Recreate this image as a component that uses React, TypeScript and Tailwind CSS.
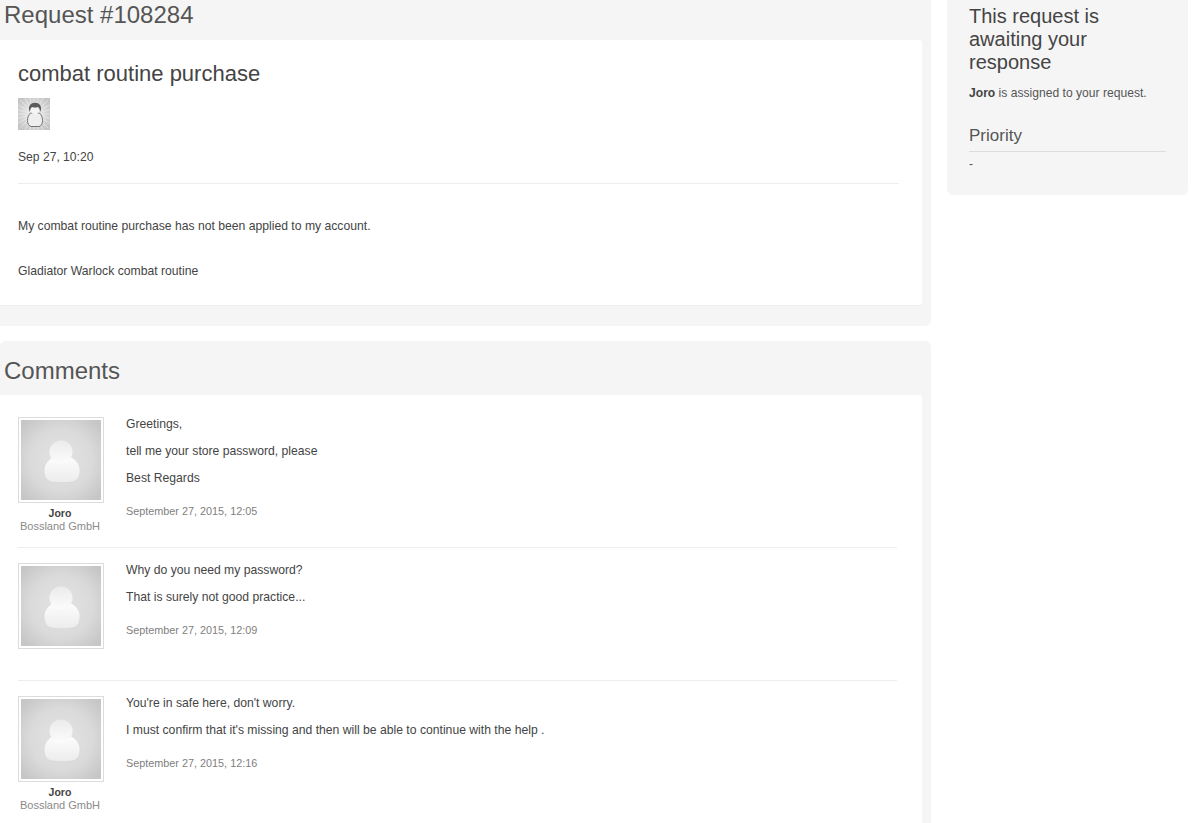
import React from "react";

function BigAvatar({ id }: { id: string }) {
  return (
    <div className="w-[86px] h-[86px] border border-[#dcdcdc] bg-white p-[2px] shrink-0">
      <svg width="80" height="80" viewBox="0 0 80 80" className="block">
        <defs>
          <radialGradient id={`bg-${id}`} cx="50%" cy="50%" r="65%">
            <stop offset="0%" stopColor="#e4e4e4" />
            <stop offset="60%" stopColor="#dadada" />
            <stop offset="100%" stopColor="#c6c6c6" />
          </radialGradient>
          <linearGradient id={`b-${id}`} x1="0" y1="0" x2="0" y2="1">
            <stop offset="0%" stopColor="#fefefe" />
            <stop offset="100%" stopColor="#ececec" />
          </linearGradient>
          <linearGradient id={`h-${id}`} x1="0" y1="0" x2="0" y2="1">
            <stop offset="0%" stopColor="#ebebeb" />
            <stop offset="100%" stopColor="#fcfcfc" />
          </linearGradient>
        </defs>
        <rect width="80" height="80" fill={`url(#bg-${id})`} />
        <path d="M23 50c0-5 3-9 7-12 3-2 7-3 11-3s8 1 11 3c4 3 7 7 7 12 0 6-2 10-6 11.500-5 1.500-19 1.500-24 0-4-1.500-6-5.500-6-11.500z" fill={`url(#b-${id})`} stroke="#d4d4d4" strokeWidth="0.6" />
        <circle cx="40" cy="32" r="11.5" fill={`url(#h-${id})`} />
      </svg>
    </div>
  );
}

function SmallAvatar() {
  const rays = Array.from({ length: 24 }, (_, i) => (i * Math.PI) / 12);
  return (
    <svg width="32" height="32" viewBox="0 0 32 32" className="block">
      <defs>
        <radialGradient id="glow" cx="50%" cy="50%" r="60%">
          <stop offset="0%" stopColor="#f6f6f6" />
          <stop offset="100%" stopColor="#c4c4c4" />
        </radialGradient>
      </defs>
      <rect width="32" height="32" fill="url(#glow)" />
      {rays.map((a, i) => (
        <line key={i} x1="16" y1="16" x2={16 + 20 * Math.cos(a)} y2={16 + 20 * Math.sin(a)} stroke="#f0f0f0" strokeWidth="0.6" />
      ))}
      <path d="M12.500 15c-2 2-3 4.500-3 7.500 0 3.500 1.500 5.500 3.500 6h8c2-.5 3.500-2.500 3.500-6 0-3-1-5.500-3-7.500z" fill="#eeeeee" stroke="#666666" strokeWidth="0.9" />
      <ellipse cx="17" cy="11.500" rx="4.500" ry="5" fill="#f4f4f4" />
      <path d="M12 14c-1.500-2-1.500-5 0-7 2-3 8-3 10 0 1.500 2 1.500 5 0 7 0-2-.5-4-2-5-2 .8-4 .8-6 0-1.500 1-2 3-2 5z" fill="#5c5c5c" />
    </svg>
  );
}

function Comment({ id, lines, date, author, className }: { id: string; lines: string[]; date: string; author: boolean; className: string }) {
  return (
    <div className={`flex ${className}`}>
      <div className="w-[86px] shrink-0">
        <BigAvatar id={id} />
        {author && (
          <div className="text-center leading-[13px] mt-[4px] w-[84px]">
            <div className="text-[10.5px] font-bold text-[#444444]">Joro</div>
            <div className="text-[11px] text-[#8a8a8a] whitespace-nowrap">Bossland GmbH</div>
          </div>
        )}
      </div>
      <div className="ml-[22px] text-[12.18px] leading-[15px] text-[#444444]">
        <div className="flex flex-col gap-[12px]">
          {lines.map((l) => (
            <p key={l}>{l}</p>
          ))}
        </div>
        <p className="mt-[18px] text-[10.83px] text-[#808080]">{date}</p>
      </div>
    </div>
  );
}

export default function App() {
  return (
    <div className="h-[823px] w-[1202px] overflow-hidden bg-white flex font-['Liberation_Sans',Arial,sans-serif]">
      <div className="w-[931px] shrink-0">
        <section className="bg-[#f5f5f5] rounded-br-[6px] h-[326px] pr-[9px]">
          <h1 className="h-[40px] pl-[4px] text-[24px] leading-[30px] text-[#555555]">Request #108284</h1>
          <div className="bg-white rounded-r-[3px] h-[266px] border-b border-[#efefef] pl-[18px] pr-[23px] pt-[21px]">
            <h2 className="text-[22px] leading-[26px] text-[#444444]">combat routine purchase</h2>
            <div className="mt-[11px]"><SmallAvatar /></div>
            <p className="mt-[20px] text-[12.12px] leading-[15px] text-[#444444]">Sep 27, 10:20</p>
            <div className="mt-[18px] border-t border-[#eeeeee]" />
            <p className="mt-[35px] text-[12.18px] leading-[15px] text-[#444444]">My combat routine purchase has not been applied to my account.</p>
            <p className="mt-[30px] text-[12.18px] leading-[15px] text-[#444444]">Gladiator Warlock combat routine</p>
          </div>
        </section>
        <section className="mt-[15px] bg-[#f5f5f5] rounded-t-[6px] h-[600px] pr-[9px]">
          <h2 className="h-[54px] pl-[4px] pt-[15px] text-[24px] leading-[30px] text-[#555555]">Comments</h2>
          <div className="bg-white rounded-tr-[3px] h-[546px] pl-[18px] pr-[25px] pt-[22px]">
            <Comment
              id="a"
              author
              className="h-[131px] border-b border-[#eeeeee]"
              lines={["Greetings,", "tell me your store password, please", "Best Regards"]}
              date="September 27, 2015, 12:05"
            />
            <Comment
              id="b"
              author={false}
              className="h-[133px] pt-[15px] border-b border-[#eeeeee]"
              lines={["Why do you need my password?", "That is surely not good practice..."]}
              date="September 27, 2015, 12:09"
            />
            <Comment
              id="c"
              author
              className="pt-[15px]"
              lines={["You're in safe here, don't worry.", "I must confirm that it's missing and then will be able to continue with the help ."]}
              date="September 27, 2015, 12:16"
            />
          </div>
        </section>
      </div>
      <aside className="ml-[16px] w-[241px] h-[195px] bg-[#f5f5f5] rounded-b-[6px] pl-[22px] pr-[22px]">
        <h2 className="pt-[5px] text-[20px] leading-[23px] text-[#444444]">This request is awaiting your response</h2>
        <p className="mt-[12px] text-[12.12px] leading-[15px] text-[#555555]"><b className="text-[#444444]">Joro</b> is assigned to your request.</p>
        <h3 className="mt-[24px] text-[17px] leading-[22px] text-[#555555] pb-[4px] border-b border-[#dddddd]">Priority</h3>
        <p className="mt-[5px] text-[12px] leading-[15px] text-[#555555]">-</p>
      </aside>
    </div>
  );
}
